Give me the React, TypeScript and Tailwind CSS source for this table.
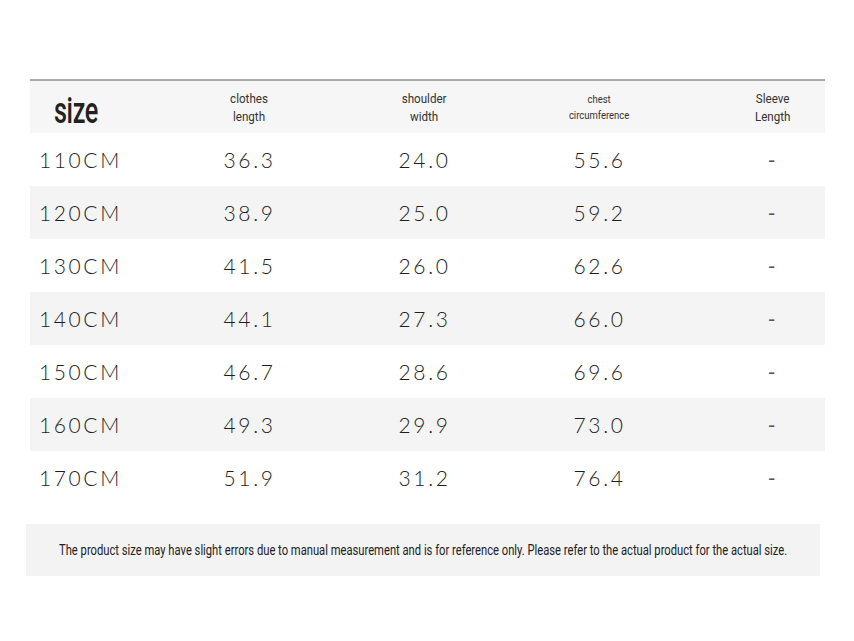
const rows = [
  ["110CM", "36.3", "24.0", "55.6"],
  ["120CM", "38.9", "25.0", "59.2"],
  ["130CM", "41.5", "26.0", "62.6"],
  ["140CM", "44.1", "27.3", "66.0"],
  ["150CM", "46.7", "28.6", "69.6"],
  ["160CM", "49.3", "29.9", "73.0"],
  ["170CM", "51.9", "31.2", "76.4"],
];

// no condensed face installed, so Roboto squeezed horizontally
const Narrow = ({ children, className = "" }: { children: React.ReactNode; className?: string }) => (
  <span className={`inline-block whitespace-nowrap font-['Roboto',sans-serif] ${className}`}>{children}</span>
);

export default function App() {
  return (
    <div className="w-[854px] h-[641px] bg-white pt-[79px] text-[#333]">
      <div className="mx-[30px] w-[795px] border-t-2 border-[#a9a9a9]">
        <div className="grid grid-cols-[132px_175px_175px_175px_1fr] h-[52px] bg-[#f6f6f6] items-center text-[#333]">
          <div className="pt-[8px]">
            <Narrow className="origin-left ml-[24px] text-[36px] font-medium leading-none tracking-[-0.5px] text-[#222] scale-x-[0.7]">size</Narrow>
          </div>
          <div className="text-center pt-[2px]">
            <Narrow className="text-[13.5px] leading-[18px] scale-x-[0.86]">clothes<br />length</Narrow>
          </div>
          <div className="text-center pt-[2px]">
            <Narrow className="text-[13.5px] leading-[18px] scale-x-[0.86]">shoulder<br />width</Narrow>
          </div>
          <div className="text-center pt-[2px]">
            <Narrow className="text-[11px] leading-[16px] scale-x-[0.86]">chest<br />circumference</Narrow>
          </div>
          <div className="pl-[34px] text-center pt-[2px]">
            <Narrow className="text-[13.5px] leading-[18px] scale-x-[0.86]">Sleeve<br />Length</Narrow>
          </div>
        </div>
        {rows.map((r, i) => (
          <div
            key={r[0]}
            className={`grid grid-cols-[132px_175px_175px_175px_1fr] h-[53px] items-center font-['Lato',sans-serif] font-light text-[21px] tracking-[2.6px] text-[#1e1e1e] ${i % 2 === 1 ? "bg-[#f4f4f4]" : "bg-white"}`}
          >
            <div className="pl-[9px]">{r[0]}</div>
            <div className="text-center">{r[1]}</div>
            <div className="text-center">{r[2]}</div>
            <div className="text-center">{r[3]}</div>
            <div className="pl-[34px] text-center text-[#555] font-normal">-</div>
          </div>
        ))}
      </div>
      <div className="mx-[26px] mt-[20px] w-[794px] h-[52px] bg-[#f3f3f3] flex items-center justify-center text-[#222]">
        <Narrow className="text-[14px] scale-x-[0.8]">
          The product size may have slight errors due to manual measurement and is for reference only. Please refer to the actual product for the actual size.
        </Narrow>
      </div>
    </div>
  );
}
